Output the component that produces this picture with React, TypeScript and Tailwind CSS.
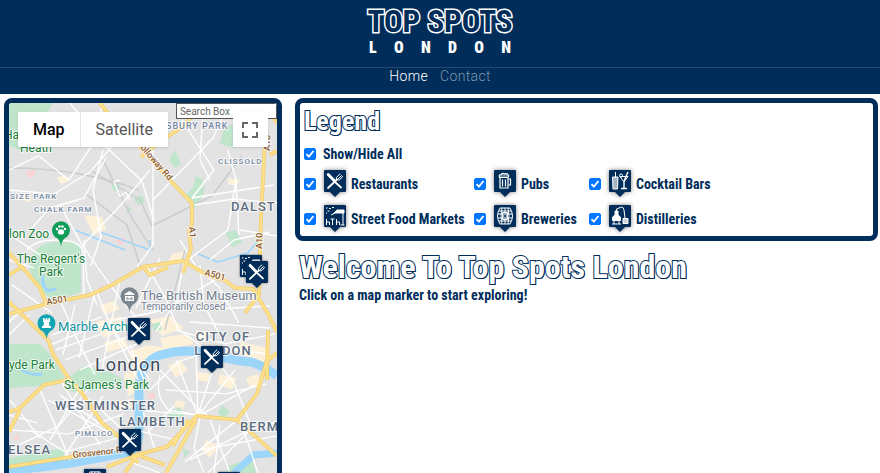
import type { ReactNode } from "react";

const NAVY = "#002d5a";

type IconName = "food" | "pub" | "cocktail" | "market" | "brewery" | "distillery";

const GLYPHS: Record<IconName, ReactNode> = {
  food: (
    <g stroke="#fff" fill="none" strokeLinecap="round">
      <path d="M4.200 4.500l6.300 6.500" strokeWidth="3" />
      <path d="M10.500 11.500l6.500 6" strokeWidth="1.8" />
      <path d="M4 18l9-8.500" strokeWidth="1.8" />
      <path d="M12.500 9.500q-1-2 1-3.300l2.500-2.200M13.500 9.500l4-4M13.500 9.800q2 .8 3-.8l2-2.500" strokeWidth="1" />
    </g>
  ),
  pub: (
    <g stroke="#fff" fill="none" strokeWidth="1.2">
      <path d="M6 8v10h8V8M8.500 9.500v7M11.500 9.500v7M14 9h2.500v6H14" />
      <path d="M5.500 7.500q-1-3 1.500-3 1.500-2 3.500-.5 3-1 4 1.500.5 2-1 2z" fill="#fff" fillOpacity=".4" />
    </g>
  ),
  cocktail: (
    <g stroke="#fff" fill="none" strokeWidth="1">
      <path d="M3.500 7h5.500l-.5 12h-4.500z" fill="#fff" fillOpacity=".65" />
      <path d="M6.500 8V2M11 6.500h8l-4 5.500z" />
      <path d="M15 12v6.500M12 18.500h6M15 11l4-9" strokeWidth="1.400" />
      <circle cx="12" cy="5.500" r="1.500" />
    </g>
  ),
  market: (
    <g stroke="#fff" fill="none" strokeWidth="1">
      <path d="M9 9l4-4h7v3h-9z" fill="#fff" />
      <path d="M9 9l-2 1M19 8v12M16.500 20h4M2.500 20v-6M2.500 17h3v3M6.500 14h4M8.500 14v6M12.500 20v-6M12.500 17h3v3" />
      <path d="M2 3h1.500M5 3.500h2M8 2.500h2M3.500 6h2M2 8h1" />
    </g>
  ),
  brewery: (
    <g stroke="#fff" fill="none" strokeWidth="1">
      <path d="M6 3h10q5 8 0 16H6q-5-8 0-16zM5 6h12M5 16h12M4 9h4M14 9h4M4 13h4M14 13h4M8 3q-2 8 0 16M14 3q2 8 0 16M11 3v4M11 15v4" />
      <path d="M8.500 7.500h5v7h-5z" fill="#fff" fillOpacity=".6" />
      <circle cx="11" cy="11" r="1" fill="#002d5a" stroke="none" />
    </g>
  ),
  distillery: (
    <g stroke="#fff" fill="none" strokeWidth="1">
      <path d="M6 10V6h3v4q4 2 2.500 5.500H3.500Q2 12 6 10z" fill="#fff" />
      <path d="M7.500 6V4l5-2q2 0 2.500 3l1 8M3 19h9M5 15.500V19M10 15.500V19" />
      <path d="M14 13.500h5v5h-5z" fill="#fff" fillOpacity=".8" />
    </g>
  ),
};

function PinShape({ name }: { name: IconName }) {
  return (
    <>
      <path d="M1 0h20a1 1 0 0 1 1 1v20a1 1 0 0 1-1 1h-5l-5 5-5-5H1a1 1 0 0 1-1-1V1a1 1 0 0 1 1-1z" fill={NAVY} />
      {GLYPHS[name]}
    </>
  );
}

function LegendPin({ name }: { name: IconName }) {
  return (
    <svg viewBox="0 0 22 27" className="h-[27px] w-[22px] shrink-0 overflow-visible drop-shadow-[0_0_2px_rgba(0,0,0,0.5)]" aria-hidden="true">
      <PinShape name={name} />
    </svg>
  );
}

const MAP_PINS: { x: number; y: number; name: IconName }[] = [
  { x: 240, y: 255, name: "market" },
  { x: 246, y: 261, name: "food" },
  { x: 128, y: 318, name: "food" },
  { x: 201, y: 346, name: "food" },
  { x: 119, y: 429, name: "food" },
  { x: 84, y: 469, name: "brewery" },
  { x: 218, y: 472, name: "market" },
];

/* Local streets, drawn thin and white under the main roads. */
const STREETS = [
  "M9 170l30-14 30 24 22-33 12-44M91 147l13-22M9 190l45 4 36-22 30-35M70 103l32 40 40 38 12 40M103 150l-10 40 8 46-10 30",
  "M30 230l20-22 34-10 22-40M60 205l22 40 28 40 30 38M84 240l3 40 10 25",
  "M27 250q8-10 28-10 26 0 28 12l1 46M153 145v100l-16 22M153 200l60-62 16-35M150 170l-30 36-38 40M120 180l-6 2 6 14 6-4 4 8",
  "M182 120l32 50-22 28M203 110l-3 50 10 20M192 198l82-13M228 150l8 30 3 55M236 180l-8 50-40 30",
  "M194 205l40-6 43 4M240 230l37 6M210 260l24-20 36-8M180 240l15 25 24 22 20 36",
  "M146 265l20 34 12 30 30 22M160 258l-24 50M184 262l-8 40-20 30M200 265l4 40 18 34M215 280l-50 30-36 8",
  "M96 290l12 30 30 60M60 300l15 35 20 40M50 345l60-24 50-10M65 360l76-28M52 335l50-18M56 350l46-16",
  "M75 305l-12 50M95 292l-16 66M120 280l-18 90M80 370l66-30M110 325l40 55M130 345l14 35",
  "M150 390l28-28 40-14 50 6M160 370l40 40 14 10M176 360l22 56M196 350l2 65M216 360l-18 55M235 370l-37 46M255 385l-56 31",
  "M160 375q-6 24 12 38M166 390l60 4 40-10M168 410l30 5M198 415l-52-4M204 345l30 38 16 40M175 330l50 14 50-10M190 322l80 6M200 310l70-4",
  "M9 450l50-24 30-38M40 390l30 70M60 380l40 65M30 430l35 22 53-14M9 430l60 4 55-20M48 400l60 32M60 395l55 40M74 385l50 46",
  "M50 440l30-52M65 456l38-60M10 400l30 38M9 415l28 8M148 432l26-26M155 450l-12-38M175 440l-40-10",
  "M200 418l-6 30 10 25M210 420l20 53M220 425l-6 48M235 422l-50 40M250 430l-42 43M240 419l18 54M200 450l77-14M190 460l60-30 27-8",
  "M130 462l30 11M10 235l30 20M9 260l25 8M12 285l40 28M22 310l-13 12M9 335l20-20",
];

/* Trunk roads, drawn yellow with a darker casing. */
const ROADS = [
  "M100 103l14 18 28 28 25 28 25 26v20l-3 8 2 18-8 24",
  "M9 314l34-9 47-10 24-11 29-17 40-6 24 14 19 6 9 7 18 1 14 23 10 20",
  "M141 157l20-16 24-16 17-22M265 103l12 20M266 120l-5 100-2 75-14 18M270 155l7-4",
  "M9 253l13 14 18 21 7 18M9 275l13-8M9 302l39 38 5 14 16 25 13 14 20 30 22 18 14 22",
  "M9 412l11-4 24-23 24-5M9 432l11-22M9 467l56-9 30-4M107 467l30-12 30-8 30-31 40 4 20-26 10-33 10-8",
  "M196 420l-30 53M237 420l40 36M173 446l15-26M143 267l7 8 18-8M137 455l-12 18M137 455l28 10M268 330l-1 50",
];

function CityMap() {
  return (
    <svg viewBox="9 103 268 473" preserveAspectRatio="xMinYMin slice" className="block h-full w-full" role="img" aria-label="Map of London">
      <rect x="9" y="103" width="268" height="473" fill="#e3e3e4" />
      <g fill="#fdf2d9">
        <path d="M96 322l25-6 6 14-24 8zM150 320l20-4 14 12-22 8zM160 338l26-4 8 10-30 6zM196 330l14 2-4 10-10-2zM240 342l28 6-4 14-24-8z" />
        <path d="M128 352l20-7 24 4-14 14-22 4zM142 366l6 22-20 8-4-22zM104 342l20-4 4 8-20 6zM100 305l14-4 6 8-16 6z" />
        <path d="M172 254l14-3-4 10-14 2zM206 440l14 6-10 12-8-8zM115 402l20-4 4 8-18 4zM196 372l14 2-2 8-12-2zM176 400l10 2-4 8-8-4z" />
        <path d="M246 378l12-4 4 10-12 4zM57 178l8-3 4 6-8 3zM228 178l12 2-4 6-8-2zM24 195l8 2-2 5-7-2zM84 215l18 2 4 12-12 6zM168 366l12-6 8 10-12 8zM220 374l16 4-4 12-14-6z" />
      </g>
      <path d="M26 172l10-3-2 8-6 1zM116 240l8-3 1 6-6 2zM148 393h7v6h-7zM13 437l5-2 1 5h-5z" fill="#f8d4d4" />
      <g fill="#bfe5cb">
        <path d="M9 103h44l-8 14-16 4 4 20-10 10-14-5z" />
        <path d="M31 262q2-18 24-20 26-2 26 8v42l-26 9-16-11-10-22z" />
        <path d="M9 344h31l8 8 17 26-24 8-32 2z" />
        <path d="M65 380l19-14 26 6 14 8-20 10-32 2z" />
        <path d="M224 128l18-8 1 22-9 6-14-4zM196 176l7 4-6 20-14-2 10-10zM134 198l8-3 3 7-7 3zM226 232l10-2 6 12-10 6zM111 186l6-4 4 6-6 4z" />
        <path d="M175 150l6 14-6 4-6-8zM206 185l-10 8-6 14 4 2 8-12zM222 405l8 6-6 8-6-6zM167 412l13-5 5 9-12 5zM152 324l8-2 2 8-8 1zM127 205l5 4-5 5zM9 458l54-10 2 8-56 14zM183 448l7 4-6 6zM228 466l24-8 4 15h-30z" />
      </g>
      <g fill="none" stroke="#9bd5fa" strokeWidth="9">
        <path d="M9 470q50-3 110-16 20-2 20-20V384q4-26 26-30 20-6 44 0 30 8 42 8 14 4 26 14" />
        <path d="M234 473l20-18 25-2" strokeWidth="7" />
      </g>
      <path d="M43 275q-2 10 5 16l8-2M22 370q8 6 20 4" fill="none" stroke="#9bd5fa" strokeWidth="3" />
      <path d="M75 230l50 20M100 232l50 18v-10M198 254l20 8 30-9 10-12" fill="none" stroke="#9bd5fa" strokeWidth="1.500" />
      <path d="M90 170l50 30 12 26 60-30 30-40M140 265l-13-40-40-30M9 168q70 0 130 22M165 330l20-80M103 160l30 60 20 30" fill="none" stroke="#c9cccf" strokeWidth="1.500" />
      <g fill="none" stroke="#fff" strokeWidth="1.400" strokeLinejoin="round">
        {STREETS.map((d) => (
          <path key={d} d={d} />
        ))}
      </g>
      <g fill="none" stroke="#f3cb66" strokeWidth="3.800" strokeLinejoin="round">
        {ROADS.map((d) => (
          <path key={d} d={d} />
        ))}
      </g>
      <g fill="none" stroke="#fde08c" strokeWidth="2.400" strokeLinejoin="round">
        {ROADS.map((d) => (
          <path key={d} d={d} />
        ))}
      </g>

      <g fontFamily="Roboto, sans-serif" stroke="#fff" strokeOpacity=".8" strokeWidth="2" strokeLinejoin="round" paintOrder="stroke">
        <g fill="#188038" fontSize="12">
          <text x="4" y="139">Ha</text>
          <text x="20" y="152">Heath</text>
          <text x="9" y="238">lon Zoo</text>
          <text x="51" y="263" textAnchor="middle">The Regent's</text>
          <text x="51" y="276" textAnchor="middle">Park</text>
          <text x="9" y="369">yde Park</text>
          <text x="64" y="389">St James's Park</text>
        </g>
        <g fill="#7486a3" fontSize="9" letterSpacing="1" fontWeight="500">
          <text x="166" y="129">SBURY PARK</text>
          <text x="218" y="164" fontSize="8">CLISSOLD</text>
          <text x="10" y="199" fontSize="8">SIZE PARK</text>
          <text x="34" y="212" fontSize="8">CHALK FARM</text>
          <text x="75" y="436" fontSize="8">PIMLICO</text>
        </g>
        <g fill="#5b6c80" fontSize="13" letterSpacing="1" fontWeight="500">
          <text x="231" y="211">DALST</text>
          <text x="223" y="341" textAnchor="middle">CITY OF</text>
          <text x="223" y="355" textAnchor="middle">LONDON</text>
          <text x="55" y="410">WESTMINSTER</text>
          <text x="119" y="426">LAMBETH</text>
          <text x="240" y="431">BERM</text>
          <text x="8" y="454">ELSEA</text>
        </g>
        <text x="95" y="371" fill="#3c4a58" fontSize="18" letterSpacing="1">London</text>
        <text x="58" y="331" fill="#1295a2" fontSize="13">Marble Arch</text>
        <text x="141" y="300" fill="#74808f" fontSize="13">The British Museum</text>
        <text x="141" y="310" fill="#74808f" fontSize="10">Temporarily closed</text>
        <g fill="#8b5a2b" fontSize="9" fontWeight="500">
          <text x="47" y="305" transform="rotate(-10 47 305)">A501</text>
          <text x="204" y="275" transform="rotate(16 204 275)">A501</text>
          <text x="189" y="227" transform="rotate(86 189 227)">A1</text>
          <text x="262" y="249" transform="rotate(-88 262 249)">A10</text>
          <text x="270" y="151" transform="rotate(-88 270 151)">A10</text>
          <text x="140" y="148" transform="rotate(49 140 148)">olloway Rd</text>
          <text x="73" y="458" transform="rotate(-6 73 458)">Grosvenor R</text>
        </g>
      </g>

      <g>
        <path d="M61 246q-1-7-6-9a9 9 0 1 1 12 0q-5 2-6 9z" fill="#0f9d58" />
        <path d="M129.500 312q-1-7-6-9a9 9 0 1 1 12 0q-5 2-6 9z" fill="#7b868f" />
        <path d="M46.500 339q-1-7-6-9a9 9 0 1 1 12 0q-5 2-6 9z" fill="#12a4b0" />
      </g>
      <g fill="#fff">
        <ellipse cx="61" cy="232" rx="3.200" ry="2.600" />
        <circle cx="57" cy="229" r="1.200" />
        <circle cx="59.500" cy="226.500" r="1.300" />
        <circle cx="62.500" cy="226.500" r="1.300" />
        <circle cx="65" cy="229" r="1.200" />
        <path d="M124.500 294l5-3 5 3v1h-10zM125 296h9v5h-9z" />
        <path d="M43 318h1.500v1.500h1.200V318h1.600v1.500h1.200V318H50v4h-1l.5 4H51v2h-9v-2h1.500l.5-4h-1z" />
      </g>
      <path d="M127 300.500v-3l2.500 2 2.500-2v3" fill="none" stroke="#7b868f" />
      {MAP_PINS.map((pin) => (
        <g key={pin.x} transform={`translate(${pin.x} ${pin.y})`} className="drop-shadow-[0_0_1px_rgba(0,0,0,0.5)]">
          <PinShape name={pin.name} />
        </g>
      ))}
    </svg>
  );
}

const CATEGORIES: { label: string; icon: IconName }[] = [
  { label: "Restaurants", icon: "food" },
  { label: "Pubs", icon: "pub" },
  { label: "Cocktail Bars", icon: "cocktail" },
  { label: "Street Food Markets", icon: "market" },
  { label: "Breweries", icon: "brewery" },
  { label: "Distilleries", icon: "distillery" },
];

function Check({ id }: { id: string }) {
  return (
    <span className="grid shrink-0 place-items-center">
      <input
        id={id}
        type="checkbox"
        defaultChecked
        className="peer col-start-1 row-start-1 size-3 appearance-none rounded-[2px] border border-[#767676] bg-white checked:border-[#0075ff] checked:bg-[#0075ff]"
      />
      <svg viewBox="0 0 12 12" className="pointer-events-none invisible col-start-1 row-start-1 size-3 peer-checked:visible" aria-hidden="true">
        <path d="M2.500 6.200l2.400 2.400 4.600-5.600" fill="none" stroke="#fff" strokeWidth="1.800" />
      </svg>
    </span>
  );
}

const OUTLINE =
  "font-bold text-white [-webkit-text-stroke:2px_#002d5a] [paint-order:stroke_fill] [text-shadow:1px_1px_0_#002d5a]";

export default function App() {
  return (
    <div className="flex h-screen flex-col overflow-hidden bg-white font-['Roboto_Condensed','Liberation_Sans_Narrow',sans-serif] text-[#002d5a]">
      <header className="shrink-0 bg-[#002d5a] text-white">
        <div className="flex h-[67px] flex-col items-center pt-1">
          <div className="text-[31px] leading-9 font-bold text-[#002d5a] [-webkit-text-stroke:3px_white] [paint-order:stroke_fill]">
            TOP SPOTS
          </div>
          <div className="flex w-[142px] justify-between text-base leading-4 font-black" aria-label="London">
            {"LONDON".split("").map((letter, i) => (
              <span key={i}>{letter}</span>
            ))}
          </div>
        </div>
        <nav className="flex h-[27px] justify-center gap-3 border-t border-[#234a72] font-['Roboto',sans-serif] text-sm leading-4 font-light tracking-wide">
          <a href="#home">Home</a>
          <a href="#contact" className="text-[#7f96ac]">Contact</a>
        </nav>
      </header>

      <main className="flex min-h-0 flex-1 items-start gap-[13px] pt-1 pr-[2px] pl-1">
        <section className="relative h-screen w-[31.8%] shrink-0 overflow-hidden rounded-lg border-[5px] border-[#002d5a] bg-[#e3e3e4]">
          <CityMap />
          <input
            type="text"
            aria-label="Search Box"
            placeholder="Search Box"
            className="absolute top-0 right-0 h-4 w-[101px] border border-[#555] bg-white px-[3px] font-['Roboto',sans-serif] text-[10px] text-[#555] placeholder:text-[#666]"
          />
          <div className="absolute top-[9px] left-[9px] flex h-[35px] bg-white font-['Roboto',sans-serif] text-base shadow">
            <button type="button" className="border-r border-[#e6e6e6] px-[15px] font-medium text-black">Map</button>
            <button type="button" className="px-[15px] text-[#565656]">Satellite</button>
          </div>
          <button
            type="button"
            aria-label="Toggle fullscreen view"
            className="absolute top-[9px] right-[9px] grid size-[35px] place-items-center bg-white shadow"
          >
            <svg viewBox="0 0 16 16" className="size-4" fill="none" stroke="#666" strokeWidth="2" aria-hidden="true">
              <path d="M1 6V1h5M10 1h5v5M15 10v5h-5M6 15H1v-5" />
            </svg>
          </button>
        </section>

        <div className="min-w-0 flex-1">
          <section className="rounded-lg border-[5px] border-[#002d5a] px-1">
            <h2 className={`text-[26px] leading-9 ${OUTLINE}`}>Legend</h2>
            <div className="mt-[3px] flex h-6 items-center gap-[7px] text-sm font-bold">
              <Check id="all" />
              <label htmlFor="all">Show/Hide All</label>
            </div>
            <div className="grid grid-cols-[170px_115px_1fr]">
              {CATEGORIES.map((c) => (
                <div key={c.icon} className="flex h-[35px] items-center gap-2 text-sm font-bold">
                  <Check id={c.icon} />
                  <label htmlFor={c.icon} className="flex items-center gap-[5px] whitespace-nowrap">
                    <LegendPin name={c.icon} />
                    {c.label}
                  </label>
                </div>
              ))}
            </div>
          </section>
          <div className="px-1 pt-[6px]">
            <h1 className={`text-[32px] leading-10 ${OUTLINE}`}>Welcome To Top Spots London</h1>
            <p className="text-sm leading-4 font-bold">Click on a map marker to start exploring!</p>
          </div>
        </div>
      </main>
    </div>
  );
}
